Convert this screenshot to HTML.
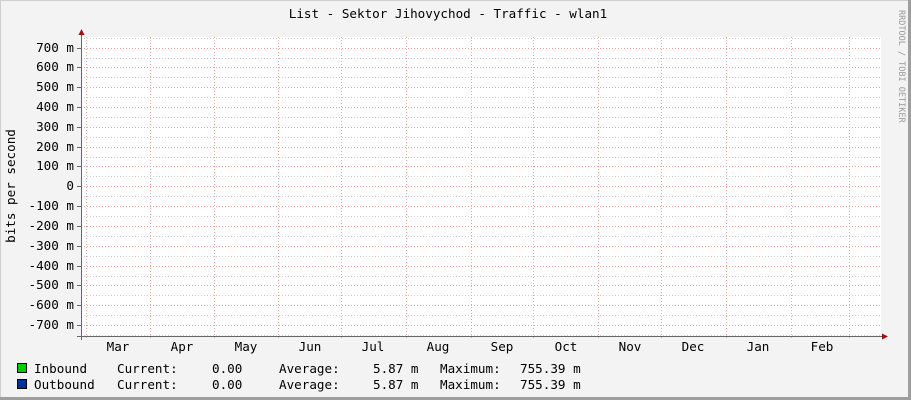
<!DOCTYPE html><html><head><style>body{margin:0;background:#f3f3f3}svg{display:block}text{font-family:"DejaVu Sans Mono","Liberation Mono",monospace;font-size:12.6px;fill:#000}</style></head><body>
<svg width="911" height="400" xmlns="http://www.w3.org/2000/svg">
<rect width="911" height="400" fill="#f3f3f3"/>
<path d="M0.5 400V0.5H911" stroke="#cfcfcf" fill="none"/>
<path d="M909.5 0V398.5H0" stroke="#9e9e9e" stroke-width="3" fill="none"/>
<rect x="81" y="37" width="800" height="299" fill="#fff"/>
<g stroke-width="1" stroke-dasharray="1,2" fill="none">
<g stroke="#d0d0d0">
<path d="M81 38.5H881M81 58.5H881M81 77.5H881M81 97.5H881M81 117.5H881M81 137.5H881M81 157.5H881M81 176.5H881M81 196.5H881M81 216.5H881M81 236.5H881M81 256.5H881M81 276.5H881M81 295.5H881M81 315.5H881M81 335.5H881"/>
</g>
<g stroke="#f3a0a0">
<path d="M81 48.5H881M81 67.5H881M81 87.5H881M81 107.5H881M81 127.5H881M81 147.5H881M81 166.5H881M81 186.5H881M81 206.5H881M81 226.5H881M81 246.5H881M81 266.5H881M81 285.5H881M81 305.5H881M81 325.5H881"/>
<path d="M86.5 37V340M150.5 37V340M214.5 37V340M278.5 37V340M341.5 37V340M406.5 37V340M471.5 37V340M533.5 37V340M598.5 37V340M661.5 37V340M726.5 37V340M791.5 37V340M849.5 37V340"/>
</g></g>
<g stroke="#666" fill="none">
<path d="M81.5 32V340M77 336.5H884"/>
<path d="M77 48.5h4M77 67.5h4M77 87.5h4M77 107.5h4M77 127.5h4M77 147.5h4M77 166.5h4M77 186.5h4M77 206.5h4M77 226.5h4M77 246.5h4M77 266.5h4M77 285.5h4M77 305.5h4M77 325.5h4"/>
</g>
<path d="M78.5 35L81.5 29L84.5 35Z" fill="#a01010"/>
<path d="M882 333.5L888 336.5L882 339.5Z" fill="#a01010"/>
<text x="448" y="18" text-anchor="middle">List - Sektor Jihovychod - Traffic - wlan1</text>
<text transform="translate(15,186) rotate(-90)" text-anchor="middle">bits per second</text>
<g text-anchor="end">
<text x="74" y="52">700 m</text><text x="74" y="71">600 m</text><text x="74" y="91">500 m</text><text x="74" y="111">400 m</text><text x="74" y="131">300 m</text><text x="74" y="151">200 m</text><text x="74" y="170">100 m</text><text x="74" y="190">0</text><text x="74" y="210">-100 m</text><text x="74" y="230">-200 m</text><text x="74" y="250">-300 m</text><text x="74" y="270">-400 m</text><text x="74" y="289">-500 m</text><text x="74" y="309">-600 m</text><text x="74" y="329">-700 m</text>
</g>
<g text-anchor="middle">
<text x="118" y="351">Mar</text><text x="182" y="351">Apr</text><text x="246" y="351">May</text><text x="310" y="351">Jun</text><text x="373" y="351">Jul</text><text x="438" y="351">Aug</text><text x="502" y="351">Sep</text><text x="566" y="351">Oct</text><text x="630" y="351">Nov</text><text x="693" y="351">Dec</text><text x="758" y="351">Jan</text><text x="822" y="351">Feb</text>
</g>
<rect x="17.5" y="363.5" width="9" height="9" fill="#00cc00" stroke="#000"/>
<rect x="17.5" y="379.5" width="9" height="9" fill="#003399" stroke="#000"/>
<g>
<text x="34" y="373">Inbound</text><text x="117" y="373">Current:</text><text x="212" y="373">0.00</text><text x="279" y="373">Average:</text><text x="373" y="373">5.87 m</text><text x="440" y="373">Maximum:</text><text x="520" y="373">755.39 m</text>
<text x="34" y="389">Outbound</text><text x="117" y="389">Current:</text><text x="212" y="389">0.00</text><text x="279" y="389">Average:</text><text x="373" y="389">5.87 m</text><text x="440" y="389">Maximum:</text><text x="520" y="389">755.39 m</text>
</g>
<text transform="translate(899,10) rotate(90)" style="font-size:8.5px;fill:#999">RRDTOOL / TOBI OETIKER</text>
</svg></body></html>
